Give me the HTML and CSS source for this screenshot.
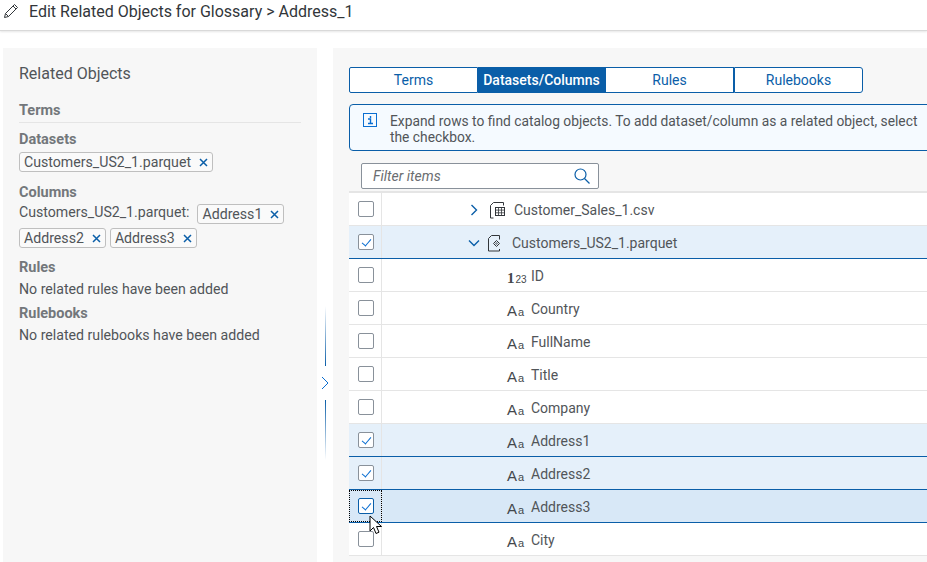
FILE: index.html
```html
<!DOCTYPE html>
<html lang="en">

<head>
    <meta charset="UTF-8">
    <meta name="viewport" content="width=device-width, initial-scale=1.0">
    <title>Edit Related Objects</title>
    <link rel="stylesheet" href="styles.css">
</head>

<body>
    <header class="page-header">
        <svg class="edit-icon" width="16" height="16" viewBox="0 0 16 16" fill="none" stroke="#32363a" stroke-width="1">
            <path d="M1.500 14.500l1-4L11.500 1.500l3 3-9 9z" />
            <path d="M2.500 10.500l3 3M10 3l3 3" />
        </svg>
        <h1 class="page-title">Edit Related Objects for Glossary &gt; Address_1</h1>
    </header>

    <main class="content">
        <!-- Left summary -->
        <aside class="summary">
            <h2 class="summary-title">Related Objects</h2>

            <h3 class="group-label group-terms">Terms</h3>

            <h3 class="group-label group-datasets">Datasets</h3>
            <div class="token-line">
                <span class="token">Customers_US2_1.parquet<svg class="token-x" width="9" height="9" viewBox="0 0 9 9"><path d="M1 1l7 7M8 1l-7 7" /></svg></span>
            </div>

            <h3 class="group-label group-columns">Columns</h3>
            <div class="token-line">
                <span class="token-prefix">Customers_US2_1.parquet:</span>
                <span class="token">Address1<svg class="token-x" width="9" height="9" viewBox="0 0 9 9"><path d="M1 1l7 7M8 1l-7 7" /></svg></span>
                <span class="token">Address2<svg class="token-x" width="9" height="9" viewBox="0 0 9 9"><path d="M1 1l7 7M8 1l-7 7" /></svg></span>
                <span class="token">Address3<svg class="token-x" width="9" height="9" viewBox="0 0 9 9"><path d="M1 1l7 7M8 1l-7 7" /></svg></span>
            </div>

            <h3 class="group-label group-rules">Rules</h3>
            <p class="empty-text">No related rules have been added</p>

            <h3 class="group-label group-rulebooks">Rulebooks</h3>
            <p class="empty-text">No related rulebooks have been added</p>
        </aside>

        <div class="splitter">
            <span class="splitter-line line-top"></span>
            <svg class="splitter-arrow" width="10" height="14" viewBox="0 0 10 14" fill="none" stroke="#0a6ed1" stroke-width="1">
                <path d="M2 1l6 6-6 6" />
            </svg>
            <span class="splitter-line line-bottom"></span>
        </div>

        <!-- Right picker -->
        <section class="picker">
            <div class="tabs">
                <button class="tab">Terms</button>
                <button class="tab tab-active">Datasets/Columns</button>
                <button class="tab">Rules</button>
                <button class="tab">Rulebooks</button>
            </div>

            <div class="info-strip">
                <svg class="info-icon" width="14" height="14" viewBox="0 0 14 14" fill="none" stroke="#0a6ed1">
                    <rect x="0.500" y="0.500" width="13" height="13" />
                    <path d="M5 6h2.500v4.500M5 10.500h5M7.500 3v2" stroke-width="1.400" />
                </svg>
                <p class="info-text">Expand rows to find catalog objects. To add dataset/column as a related object, select the checkbox.</p>
            </div>

            <div class="filter">
                <span class="filter-text">Filter items</span>
                <svg width="16" height="16" viewBox="0 0 16 16" fill="none" stroke="#0a5ea8" stroke-width="1.200">
                    <circle cx="6.500" cy="6.500" r="5.500" />
                    <path d="M10.500 10.500l5 5" />
                </svg>
            </div>

            <div class="table">
                <div class="row">
                    <div class="check-cell"><span class="check"></span></div>
                    <div class="name-cell file-cell">
                        <svg class="chevron" width="10" height="12" viewBox="0 0 10 12" fill="none" stroke="#0a5ea8" stroke-width="1.400">
                            <path d="M2.500 1l5 5-5 5" />
                        </svg>
                        <svg class="file-icon" width="16" height="18" viewBox="0 0 16 18" fill="none" stroke="#32363a">
                            <path d="M1.500 17V4.500l3-3h10v3M1.500 17h3" />
                            <rect x="6.500" y="6.500" width="9" height="8" />
                            <path d="M6.500 9.100h9M6.500 11.800h9M9.500 6.500v8M12.500 6.500v8" stroke-width="0.800" />
                        </svg>
                        <span>Customer_Sales_1.csv</span>
                    </div>
                </div>
                <div class="row row-selected">
                    <div class="check-cell"><span class="check check-on"></span></div>
                    <div class="name-cell file-cell open-cell">
                        <svg class="chevron" width="12" height="10" viewBox="0 0 12 10" fill="none" stroke="#0a5ea8" stroke-width="1.400">
                            <path d="M1 2.500l5 5 5-5" />
                        </svg>
                        <svg class="file-icon" width="14" height="18" viewBox="0 0 14 18" fill="none" stroke="#32363a">
                            <path d="M1.500 17V4.500l3-3h8v4M1.500 17h11v-2" />
                            <path d="M9.500 6.500l3 3-3 3-3-3z" />
                            <circle cx="9.500" cy="9.500" r="0.800" stroke-width="0.700" />
                        </svg>
                        <span>Customers_US2_1.parquet</span>
                    </div>
                </div>
                <div class="row">
                    <div class="check-cell"><span class="check"></span></div>
                    <div class="name-cell"><span class="type-icon"><span class="num-big">1</span><small>23</small></span>ID</div>
                </div>
                <div class="row">
                    <div class="check-cell"><span class="check"></span></div>
                    <div class="name-cell"><span class="type-icon">A<small>a</small></span>Country</div>
                </div>
                <div class="row">
                    <div class="check-cell"><span class="check"></span></div>
                    <div class="name-cell"><span class="type-icon">A<small>a</small></span>FullName</div>
                </div>
                <div class="row">
                    <div class="check-cell"><span class="check"></span></div>
                    <div class="name-cell"><span class="type-icon">A<small>a</small></span>Title</div>
                </div>
                <div class="row">
                    <div class="check-cell"><span class="check"></span></div>
                    <div class="name-cell"><span class="type-icon">A<small>a</small></span>Company</div>
                </div>
                <div class="row row-selected">
                    <div class="check-cell"><span class="check check-on"></span></div>
                    <div class="name-cell"><span class="type-icon">A<small>a</small></span>Address1</div>
                </div>
                <div class="row row-selected">
                    <div class="check-cell"><span class="check check-on"></span></div>
                    <div class="name-cell"><span class="type-icon">A<small>a</small></span>Address2</div>
                </div>
                <div class="row row-selected row-hover">
                    <div class="check-cell check-focus"><span class="check check-on check-hover"></span></div>
                    <div class="name-cell"><span class="type-icon">A<small>a</small></span>Address3</div>
                </div>
                <div class="row">
                    <div class="check-cell"><span class="check"></span></div>
                    <div class="name-cell"><span class="type-icon">A<small>a</small></span>City</div>
                </div>
            </div>
        </section>
    </main>

    <!-- Mouse pointer in the photo -->
    <svg class="cursor" width="14" height="22" viewBox="0 0 14 22">
        <path d="M1 1v15l3.500-3.500 2.500 6 3-1.300-2.500-5.700h5z" fill="#fff" stroke="#000" stroke-width="1" />
    </svg>
</body>

</html>
```

FILE: styles.css
```css
* {
    margin: 0;
    padding: 0;
    box-sizing: border-box;
}

body {
    font-family: Roboto, Arial, sans-serif;
    font-size: 14px;
    color: #32363a;
    background-color: #fff;
    width: 927px;
    height: 562px;
    overflow: hidden;
    position: relative;
}

.page-header {
    height: 31px;
    display: flex;
    align-items: center;
    gap: 10px;
    padding: 0 0 8px 3px;
    border-bottom: 1px solid #d9d9d9;
    box-shadow: 0 1px 2px rgba(0, 0, 0, 0.1);
}

.page-title {
    font-size: 16px;
    font-weight: 400;
    white-space: nowrap;
}

.content {
    display: flex;
    height: 514px;
    margin-top: 17px;
    padding-left: 3px;
}

/* Left summary */

.summary {
    width: 314px;
    flex: none;
    background-color: #f7f7f7;
    padding: 16px 16px 0;
    font-size: 14.150px;
    color: #515559;
}

.summary-title {
    font-size: 16px;
    font-weight: 400;
    line-height: 20px;
    margin-bottom: 18px;
}

.group-label {
    font-size: 14.500px;
    font-weight: 700;
    line-height: 18px;
    color: #73777b;
}

.group-terms {
    padding-bottom: 2px;
    border-bottom: 1px solid #e5e5e5;
}

.group-datasets {
    margin-top: 8px;
    margin-bottom: 3px;
}

.group-columns {
    margin-top: 12px;
    margin-bottom: 2px;
}

.group-rules {
    margin-top: 11px;
}

.group-rulebooks {
    margin-top: 4px;
}

.token-line {
    display: flex;
    flex-wrap: wrap;
    align-items: flex-start;
    gap: 4px;
}

.token {
    display: inline-flex;
    align-items: center;
    height: 20px;
    padding: 0 4px;
    color: #515559;
    background-color: #fafafa;
    border: 1px solid #bfbfbf;
    border-radius: 3px;
    white-space: nowrap;
}

.token-x {
    flex: none;
    margin-left: 8px;
    fill: none;
    stroke: #0a5ea8;
    stroke-width: 1.500;
}

.token-prefix {
    line-height: 16px;
    margin-right: 4px;
}

.empty-text {
    line-height: 24px;
}

/* Splitter */

.splitter {
    width: 16px;
    flex: none;
    display: flex;
    flex-direction: column;
    align-items: center;
    justify-content: center;
    padding-top: 156px;
}

.splitter-line {
    width: 1px;
    height: 60px;
}

.line-top {
    background: linear-gradient(to bottom, #fff, #0a5ea8);
}

.line-bottom {
    background: linear-gradient(to bottom, #0a5ea8, #fff);
}

.splitter-arrow {
    margin: 10px 0;
}

/* Right picker */

.picker {
    flex: 1;
    min-width: 0;
    background-color: #f7f7f7;
    padding: 19px 0 0 16px;
}

.tabs {
    display: flex;
    width: 514px;
    height: 26px;
}

.tab {
    flex: 1;
    font-family: inherit;
    font-size: 14px;
    color: #0a5ea8;
    background-color: #fff;
    border: 1px solid #0a5ea8;
    border-left-width: 0;
}

.tab:first-child {
    border-left-width: 1px;
    border-radius: 2px 0 0 2px;
}

.tab:last-child {
    border-left-width: 1px;
    border-radius: 0 3px 3px 0;
}

.tab-active {
    color: #fff;
    font-weight: 500;
    background-color: #0a5ea8;
}

.info-strip {
    display: flex;
    gap: 13px;
    width: 600px;
    height: 47px;
    margin-top: 11px;
    padding: 8px 0 0 13px;
    background-color: #f5faff;
    border: 1px solid #0a5ea8;
    border-radius: 4px 0 0 4px;
}

.info-icon {
    flex: none;
}

.info-text {
    width: 540px;
    font-size: 13.800px;
    line-height: 16px;
    color: #515559;
}

.filter {
    display: flex;
    align-items: center;
    justify-content: space-between;
    width: 238px;
    height: 26px;
    margin: 12px 0 2px 12px;
    padding: 0 8px 0 11px;
    background-color: #fff;
    border: 1px solid #89919a;
    border-radius: 2px;
}

.filter-text {
    font-style: italic;
    color: #6a6d70;
}

.table {
    border-top: 2px solid #e5e5e5;
    background-color: #fff;
}

.row {
    display: flex;
    height: 33px;
    border-bottom: 1px solid #e5e5e5;
}

.row-selected {
    background-color: #e5f0fa;
    border-bottom-color: #0a5ea8;
}

.row-hover {
    background-color: #d8e8f7;
}

.check-cell {
    width: 33px;
    flex: none;
    display: flex;
    align-items: center;
    justify-content: center;
    padding-left: 1px;
    border-right: 1px solid #e5e5e5;
}

.check-focus {
    outline: 1px dotted #000;
    outline-offset: -1px;
}

.check {
    width: 16px;
    height: 16px;
    position: relative;
    background-color: #fff;
    border: 1px solid #89919a;
    border-radius: 2px;
}

.check-hover {
    border-color: #0a5ea8;
}

/* tick drawn from two borders */
.check-on::after {
    content: "";
    position: absolute;
    left: 5px;
    top: 2px;
    width: 4px;
    height: 8px;
    border-right: 1.500px solid #0a6ed1;
    border-bottom: 1.500px solid #0a6ed1;
    transform: rotate(40deg);
}

.name-cell {
    flex: 1;
    display: flex;
    align-items: center;
    padding-left: 125px;
    padding-top: 2px;
    color: #515559;
    white-space: nowrap;
}

.file-cell {
    padding-left: 87px;
}

.chevron {
    flex: none;
    margin-right: 10px;
}

.open-cell .chevron {
    margin-right: 7px;
    margin-left: -1px;
}

.file-icon {
    flex: none;
    margin-right: 9px;
}

.open-cell .file-icon {
    margin-right: 11px;
}

.type-icon {
    width: 24px;
    flex: none;
    font-family: "Liberation Sans", sans-serif;
    font-size: 15px;
    line-height: 18px;
    margin-top: 5px;
    color: #44484c;
}

.type-icon small {
    font-size: 11px;
    margin-left: 1px;
}

.num-big {
    font-family: "Liberation Serif", serif;
    font-weight: 700;
    font-size: 15px;
}

.num-big + small {
    font-size: 10px;
}

.cursor {
    position: absolute;
    left: 369px;
    top: 515px;
}
```
